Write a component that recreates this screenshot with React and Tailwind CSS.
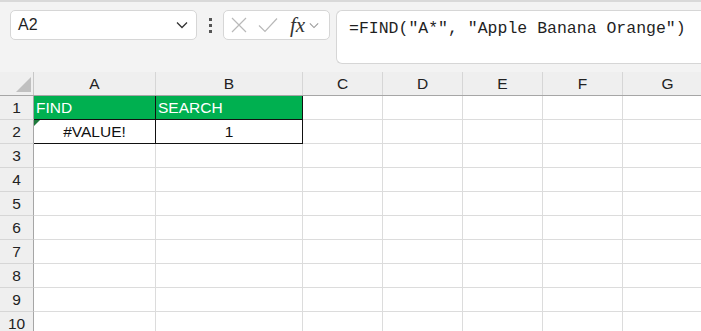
import { useState } from 'react'

const columns = [
  { key: 'A', width: 'w-[122px]' },
  { key: 'B', width: 'w-[147px]' },
  { key: 'C', width: 'w-[80px]' },
  { key: 'D', width: 'w-[80px]' },
  { key: 'E', width: 'w-[80px]' },
  { key: 'F', width: 'w-[80px]' },
  { key: 'G', width: 'w-[90px]' },
]

const rows = [1, 2, 3, 4, 5, 6, 7, 8, 9, 10]

function Chevron({ className }) {
  return (
    <svg viewBox="0 0 12 8" className={className} fill="none" stroke="currentColor" strokeWidth="1.3">
      <path d="M1 1.5 6 6.5 11 1.5" />
    </svg>
  )
}

function FormulaBar({ formula }) {
  return (
    <div className="flex h-[70px] items-start pl-[10px] pt-[8px]">
      <div className="flex h-[30px] w-[187px] items-center justify-between rounded-[5px] border border-[#d6d6d6] bg-white pl-[7px] pr-[8px]">
        <span className="text-[16px] text-[#1f1f1f]">A2</span>
        <Chevron className="h-[8px] w-[12px] text-[#333]" />
      </div>

      <div className="flex h-[30px] w-[26px] flex-col items-center justify-center gap-[3px]">
        <span className="h-[3px] w-[3px] bg-[#555]" />
        <span className="h-[3px] w-[3px] bg-[#555]" />
        <span className="h-[3px] w-[3px] bg-[#555]" />
      </div>

      <div className="flex h-[30px] w-[107px] items-center rounded-[5px] border border-[#d6d6d6] bg-white pl-[7px]">
        <svg viewBox="0 0 16 16" className="h-[16px] w-[16px] text-[#b9b9b9]" fill="none" stroke="currentColor" strokeWidth="1.2">
          <path d="M1 1 15 15M15 1 1 15" />
        </svg>
        <svg viewBox="0 0 20 16" className="ml-[11px] h-[16px] w-[20px] text-[#b9b9b9]" fill="none" stroke="currentColor" strokeWidth="1.2">
          <path d="M1 8.5 7 14.5 19 1.5" />
        </svg>
        <span className="ml-[12px] font-['Liberation_Serif'] text-[21px] italic leading-none text-[#333]">fx</span>
        <Chevron className="ml-[4px] h-[7px] w-[10px] text-[#9a9a9a]" />
      </div>

      <div className="ml-[6px] h-[54px] flex-1 rounded-l-[6px] border border-r-0 border-[#d6d6d6] bg-white pl-[12px] pt-[5px]">
        <span className="font-['Liberation_Mono'] text-[16.5px] leading-[22px] text-[#1f1f1f]">{formula}</span>
      </div>
    </div>
  )
}

function Cell({ col, row }) {
  const base = `${col.width} shrink-0 h-full border-r flex items-center text-[15.5px]`

  if (row === 1 && (col.key === 'A' || col.key === 'B')) {
    return (
      <div className={`${base} bg-[#00b050] px-[2px] text-white ${col.key === 'A' ? 'border-[#00b050] border-r-[#111]' : 'border-r-[#111]'} border-b border-b-[#111]`}>
        {col.key === 'A' ? 'FIND' : 'SEARCH'}
      </div>
    )
  }

  if (row === 2 && (col.key === 'A' || col.key === 'B')) {
    return (
      <div className={`${base} relative justify-center border-b border-r-[#111] border-b-[#111] text-[#111]`}>
        {col.key === 'A' ? (
          <>
            <span className="absolute left-0 top-0 h-0 w-0 border-r-[6px] border-t-[6px] border-r-transparent border-t-[#1e7a3c]" />
            #VALUE!
          </>
        ) : (
          '1'
        )}
      </div>
    )
  }

  return <div className={`${base} border-b border-[#dcdcdc]`} />
}

export default function App() {
  const [formula] = useState('=FIND("A*", "Apple Banana Orange")')

  return (
    <div className="h-[331px] w-[701px] overflow-hidden bg-[#f3f3f3] font-['Liberation_Sans',sans-serif]">
      <div className="h-[2px] bg-[#d9d9d9]" />
      <FormulaBar formula={formula} />

      <div className="flex h-[24px] border-b border-[#a6a6a6] bg-[#efefef] text-[15.5px] text-[#222]">
        <div className="relative h-full w-[34px] shrink-0 border-r border-[#c8c8c8]">
          <span className="absolute bottom-[3px] right-[2px] h-0 w-0 border-b-[15px] border-l-[15px] border-b-[#c0c0c0] border-l-transparent" />
        </div>
        {columns.map((col) => (
          <div key={col.key} className={`${col.width} flex h-full shrink-0 items-center justify-center border-r border-[#d6d6d6]`}>
            {col.key}
          </div>
        ))}
      </div>

      {rows.map((row) => (
        <div key={row} className="flex h-[24px] bg-white">
          <div className="flex h-full w-[34px] shrink-0 items-center justify-center border-b border-r border-b-[#d6d6d6] border-r-[#a6a6a6] bg-[#efefef] text-[15.5px] text-[#222]">
            {row}
          </div>
          {columns.map((col) => (
            <Cell key={col.key} col={col} row={row} />
          ))}
        </div>
      ))}
    </div>
  )
}
